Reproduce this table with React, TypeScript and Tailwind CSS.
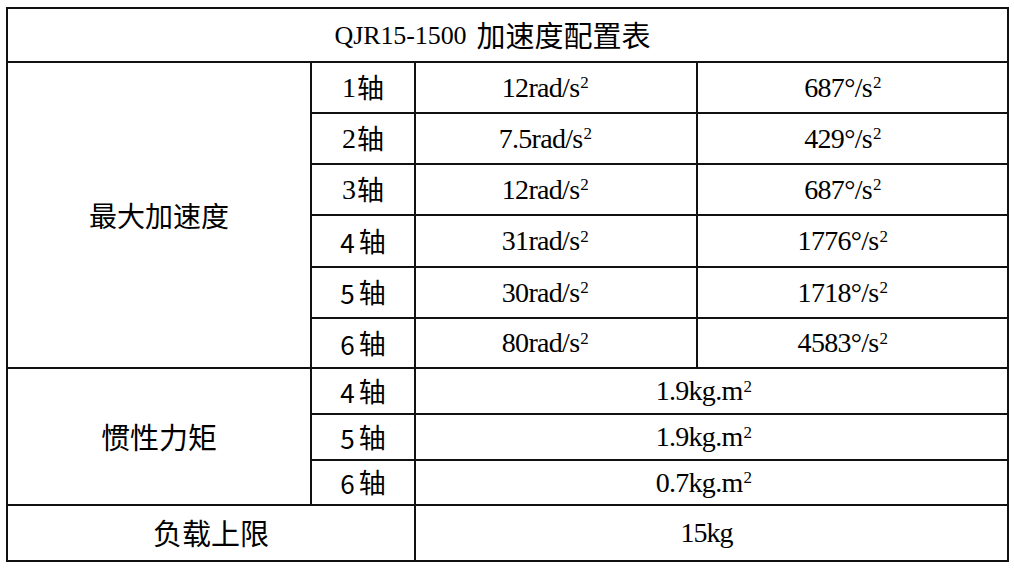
import React from "react";

const serif = "font-['Liberation_Serif','Noto_Sans_CJK_SC',serif]";
const cjk = "font-['Noto_Sans_CJK_SC',sans-serif]";

function Cell({ children, className = "" }: { children?: React.ReactNode; className?: string }) {
  return (
    <div className={`bg-white flex items-center justify-center text-black whitespace-nowrap ${className}`}>
      {children}
    </div>
  );
}

function Sup({ children }: { children: React.ReactNode }) {
  return <sup className="text-[17px] top-[-0.5em] ml-[1px]">{children}</sup>;
}

function Axis({ n, sans }: { n: number; sans?: boolean }) {
  return (
    <Cell className="text-[26px]">
      <span className={sans ? `${cjk} text-[26px] mr-[4px]` : `${serif} text-[28px] mr-[1px]`}>{n}</span>
      <span className={`${cjk} text-[27px]`}>轴</span>
    </Cell>
  );
}

function Val({ v, unit, shift = "" }: { v: string; unit: string; shift?: string }) {
  return (
    <Cell className={`${serif} text-[28px] tracking-[-0.7px]`}>
      <span className={shift}>
        {v}
        {unit}
        <Sup>2</Sup>
      </span>
    </Cell>
  );
}

const accel = [
  ["12", "687"],
  ["7.5", "429"],
  ["12", "687"],
  ["31", "1776"],
  ["30", "1718"],
  ["80", "4583"],
];

export default function App() {
  return (
    <div className="w-[1014px] h-[570px] bg-white overflow-hidden">
      <div className="h-[7px] overflow-hidden pl-[219px]">
        <div className={`${serif} text-[26px] leading-[26px] mt-[-26px] text-black`}>g</div>
      </div>
      <div className="ml-[6px] w-[1003px] grid grid-cols-[302px_102px_280px_309px] grid-rows-[52px_49px_49px_49px_50px_49px_48px_44px_44px_43px_54px] gap-[2px] p-[2px] bg-[#111]">
        <Cell className={`col-span-4 ${serif} text-[26px]`}>
          <span className="mr-[30px] flex items-center">
            <span className="tracking-[-0.1px]">QJR15-1500</span>
            <span className={`${cjk} text-[29px] ml-[10px]`}>加速度配置表</span>
          </span>
        </Cell>

        <Cell className={`row-span-6 ${cjk} text-[28px]`}>最大加速度</Cell>
        {accel.map(([r, d], i) => (
          <React.Fragment key={i}>
            <Axis n={i + 1} sans={i >= 3} />
            <Val v={r} unit="rad/s" shift="mr-[22px]" />
            <Val v={d} unit="°/s" shift="mr-[20px]" />
          </React.Fragment>
        ))}

        <Cell className={`row-span-3 ${cjk} text-[29px]`}>惯性力矩</Cell>
        {[
          [4, "1.9"],
          [5, "1.9"],
          [6, "0.7"],
        ].map(([n, v]) => (
          <React.Fragment key={n as number}>
            <Axis n={n as number} sans />
            <Cell className={`col-span-2 ${serif} text-[28px] tracking-[-0.7px]`}>
              <span className="mr-[16px]">
                {v}kg.m
                <Sup>2</Sup>
              </span>
            </Cell>
          </React.Fragment>
        ))}

        <Cell className={`col-span-2 ${cjk} text-[29px]`}>负载上限</Cell>
        <Cell className={`col-span-2 ${serif} text-[28px] tracking-[-1px]`}>
          <span className="mr-[10px]">15kg</span>
        </Cell>
      </div>
    </div>
  );
}
